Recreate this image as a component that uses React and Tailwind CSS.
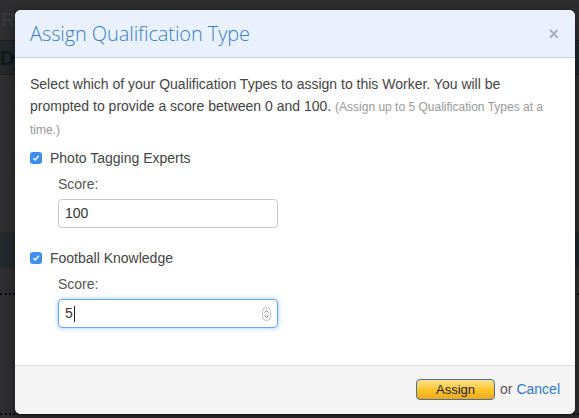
import React from "react";

const font = { fontFamily: '"Liberation Sans", Arial, sans-serif' };

const Backdrop = () => (
  <div className="absolute inset-0 bg-[#2e2e30]">
    <div className="h-[10px]" />
    <div className="h-[30px] pl-[1px] text-[20px] leading-none text-[#3a3b3d]">R</div>
    <div className="h-[35px] bg-[#22292d] border-y border-[#1b1f22] flex items-center pl-0 text-[20px] font-bold text-[#11171a]">
      De
    </div>
    <div className="h-[157px]" />
    <div className="h-[36px] bg-[#22292d]" />
    <div className="h-[25px]" />
    <div className="border-b-2 border-dotted border-[#0b0b0b]" />
    <div className="h-[118px]" />
    <div className="border-b-2 border-dotted border-[#0b0b0b]" />
  </div>
);

const QualItem = ({ label, value, focused }) => (
  <div>
    <label className="flex items-center gap-[8px] text-[14px] text-[#444] leading-[20px]">
      <span className="w-[12px] h-[12px] rounded-[3px] bg-[#3d8ef0] flex items-center justify-center">
        <svg width="8" height="8" viewBox="0 0 8 8">
          <path d="M1.3 4.2 L3.2 6 L6.8 1.8" fill="none" stroke="white" strokeWidth="1.4" />
        </svg>
      </span>
      {label}
    </label>
    <div className="pl-[28px] mt-[6px]">
      <div className="text-[14px] text-[#555] leading-[20px]">Score:</div>
      <div
        className={`mt-[5px] w-[220px] h-[29px] rounded-[4px] bg-white flex items-center px-[6px] text-[14px] text-[#333] ${
          focused
            ? "border border-[#6aa8ee] shadow-[0_0_5px_rgba(82,168,236,0.6)]"
            : "border border-[#c8c8c8]"
        }`}
      >
        <span>{value}</span>
        {focused && <span className="w-px h-[16px] bg-[#222] ml-[1px]" />}
        {focused && (
          <span className="ml-auto w-[9px] h-[14px] rounded-full border border-[#bbb] flex flex-col items-center justify-center text-[#666] leading-none">
            <svg width="5" height="10" viewBox="0 0 5 10">
              <path d="M0.5 3.5 L2.5 1.5 L4.5 3.5 M0.5 6.5 L2.5 8.5 L4.5 6.5" fill="none" stroke="#666" strokeWidth="0.9" />
            </svg>
          </span>
        )}
      </div>
    </div>
  </div>
);

export default function App() {
  return (
    <div className="relative w-[579px] h-[418px] overflow-hidden" style={font}>
      <Backdrop />
      <div className="absolute left-[15px] top-[10px] w-[560px] h-[404px] rounded-[6px] bg-white overflow-hidden flex flex-col shadow-[0_2px_8px_rgba(0,0,0,0.5)]">
        <div className="h-[48px] bg-[#e9f2fc] border-b border-[#b8d6f2] flex items-center justify-between pl-[15px] pr-[16px]">
          <h3
            className="text-[20px] font-light text-[#3b7dc9] tracking-[-0.1px]"
            style={{ fontFamily: '"Open Sans", "Liberation Sans", sans-serif', fontWeight: 300 }}
          >
            Assign Qualification Type
          </h3>
          <span className="text-[#a9b2bb] text-[18px] font-bold leading-none">×</span>
        </div>
        <div className="flex-1 px-[15px] pt-[15px]">
          <p className="text-[14px] leading-[22px] text-[#444]">
            Select which of your Qualification Types to assign to this Worker. You will be
            prompted to provide a score between 0 and 100.{" "}
            <span className="text-[12px] text-[#999]">
              (Assign up to 5 Qualification Types at a time.)
            </span>
          </p>
          <div className="mt-[7px] flex flex-col gap-[20px]">
            <QualItem label="Photo Tagging Experts" value="100" />
            <QualItem label="Football Knowledge" value="5" focused />
          </div>
        </div>
        <div className="h-[49px] bg-[#f4f4f4] border-t border-[#dedede] flex items-center justify-end pr-[15px] gap-[5px] pb-[2px]">
          <button className="w-[79px] h-[21px] rounded-[4px] border border-[#4a6f9c] bg-gradient-to-b from-[#fde18a] via-[#fcc72c] to-[#f0a81a] text-[13px] text-[#17234a] leading-none">
            Assign
          </button>
          <span className="text-[14px] text-[#555]">
            or <span className="text-[#2f78c4]">Cancel</span>
          </span>
        </div>
      </div>
    </div>
  );
}
